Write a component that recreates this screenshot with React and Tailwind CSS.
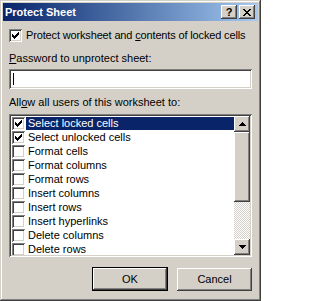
// ProtectSheetDialog — Win2000-style "Protect Sheet" dialog from Excel.

import React from 'react';

const RAISED = 'shadow-[inset_-1px_-1px_0_#404040,inset_1px_1px_0_#fff,inset_-2px_-2px_0_#808080,inset_2px_2px_0_#d4d0c8]';
const SUNKEN = 'shadow-[inset_1px_1px_0_#808080,inset_-1px_-1px_0_#fff,inset_2px_2px_0_#404040,inset_-2px_-2px_0_#d4d0c8]';

const ITEMS = [
  { label: 'Select locked cells', checked: true, selected: true },
  { label: 'Select unlocked cells', checked: true },
  { label: 'Format cells' },
  { label: 'Format columns' },
  { label: 'Format rows' },
  { label: 'Insert columns' },
  { label: 'Insert rows' },
  { label: 'Insert hyperlinks' },
  { label: 'Delete columns' },
  { label: 'Delete rows' },
];

// 7x7 pixel check glyph
const CHECK = ['......#', '.....##', '#...###', '##.###.', '#####..', '.###...', '..#....'];
const CLOSE = ['##....##', '.##..##.', '..####..', '...##...', '..####..', '.##..##.', '##....##'];

const PixelGlyph = ({ rows, color = '#000' }) => (
  <svg width={rows[0].length} height={rows.length} shapeRendering="crispEdges" className="block">
    {rows.flatMap((r, y) => [...r].map((c, x) => c === '#' ? <rect key={`${x}-${y}`} x={x} y={y} width="1" height="1" fill={color} /> : null))}
  </svg>
);

const Check = ({ checked }) => (
  <div className={`w-[13px] h-[13px] bg-white flex-shrink-0 flex items-center justify-center ${SUNKEN}`}>
    {checked && <PixelGlyph rows={CHECK} />}
  </div>
);

const Arrow = ({ up }) => (
  <svg width="7" height="4" shapeRendering="crispEdges" className="block">
    <path d={up ? 'M3 0h1v1h1v1h1v1h1v1H0V3h1V2h1V1h1z' : 'M0 0h7v1H6v1H5v1H4v1H3V3H2V2H1V1H0z'} fill="#000" />
  </svg>
);

const TitleButton = ({ children }) => (
  <div className={`w-[16px] h-[14px] bg-[#d4d0c8] flex items-center justify-center ${RAISED}`}>{children}</div>
);

export default function App() {
  return (
    <div className="w-[261px] h-[301px] bg-[#d4d0c8] p-[3px] shadow-[inset_-1px_-1px_0_#404040,inset_1px_1px_0_#d4d0c8,inset_-2px_-2px_0_#808080,inset_2px_2px_0_#fff] font-['Liberation_Sans',Arial,sans-serif] text-[11px] leading-[13px] text-black flex flex-col overflow-hidden select-none">
      {/* Title bar */}
      <div className="h-[18px] bg-linear-to-r from-[#0a246a] to-[#a6caf0] flex items-center pl-[2px] pr-[3px]">
        <span className="text-white font-bold flex-1">Protect Sheet</span>
        <TitleButton><span className="font-bold text-[11px] leading-none mt-[1px]">?</span></TitleButton>
        <div className="w-[2px]" />
        <TitleButton><PixelGlyph rows={CLOSE} /></TitleButton>
      </div>

      <div className="flex flex-col px-[6px]">
        <div className="flex items-center mt-[8px]">
          <Check checked />
          <span className="ml-[4px] whitespace-nowrap tracking-[-0.15px]">Protect worksheet and <u>c</u>ontents of locked cells</span>
        </div>

        <p className="mt-[10px] whitespace-nowrap"><u>P</u>assword to unprotect sheet:</p>
        <div className={`mt-[4px] h-[20px] bg-white flex items-center pl-[4px] ${SUNKEN}`}>
          <div className="w-px h-[12px] bg-black" />
        </div>

        <p className="mt-[7px] whitespace-nowrap">All<u>o</u>w all users of this worksheet to:</p>
        <div className={`mt-[5px] h-[143px] bg-white p-[2px] flex ${SUNKEN}`}>
          <div className="flex-1 flex flex-col overflow-hidden">
            {ITEMS.map(it => (
              <div key={it.label} className="h-[14px] flex items-center flex-shrink-0">
                <div className="ml-[1px]"><Check checked={it.checked} /></div>
                <div className={`ml-[1px] flex-1 h-[13px] pl-[2px] flex items-center whitespace-nowrap ${it.selected ? 'bg-[#0a246a] text-white' : ''}`}>
                  {it.label}
                </div>
              </div>
            ))}
          </div>
          {/* Scrollbar */}
          <div className="w-[16px] flex flex-col">
            <div className={`h-[16px] bg-[#d4d0c8] flex items-center justify-center ${RAISED}`}><Arrow up /></div>
            <div className={`h-[70px] bg-[#d4d0c8] ${RAISED}`} />
            <div className="flex-1 bg-[image:repeating-conic-gradient(#fff_0_25%,#d4d0c8_0_50%)] bg-[length:2px_2px]" />
            <div className={`h-[16px] bg-[#d4d0c8] flex items-center justify-center ${RAISED}`}><Arrow /></div>
          </div>
        </div>

        <div className="flex justify-end gap-[9px] mt-[10px]">
          <div className="w-[76px] h-[24px] border border-black">
            <div className={`w-full h-full bg-[#d4d0c8] flex items-center justify-center ${RAISED}`}>OK</div>
          </div>
          <div className={`w-[75px] h-[23px] mt-[1px] bg-[#d4d0c8] flex items-center justify-center ${RAISED}`}>Cancel</div>
        </div>
      </div>
    </div>
  );
}
